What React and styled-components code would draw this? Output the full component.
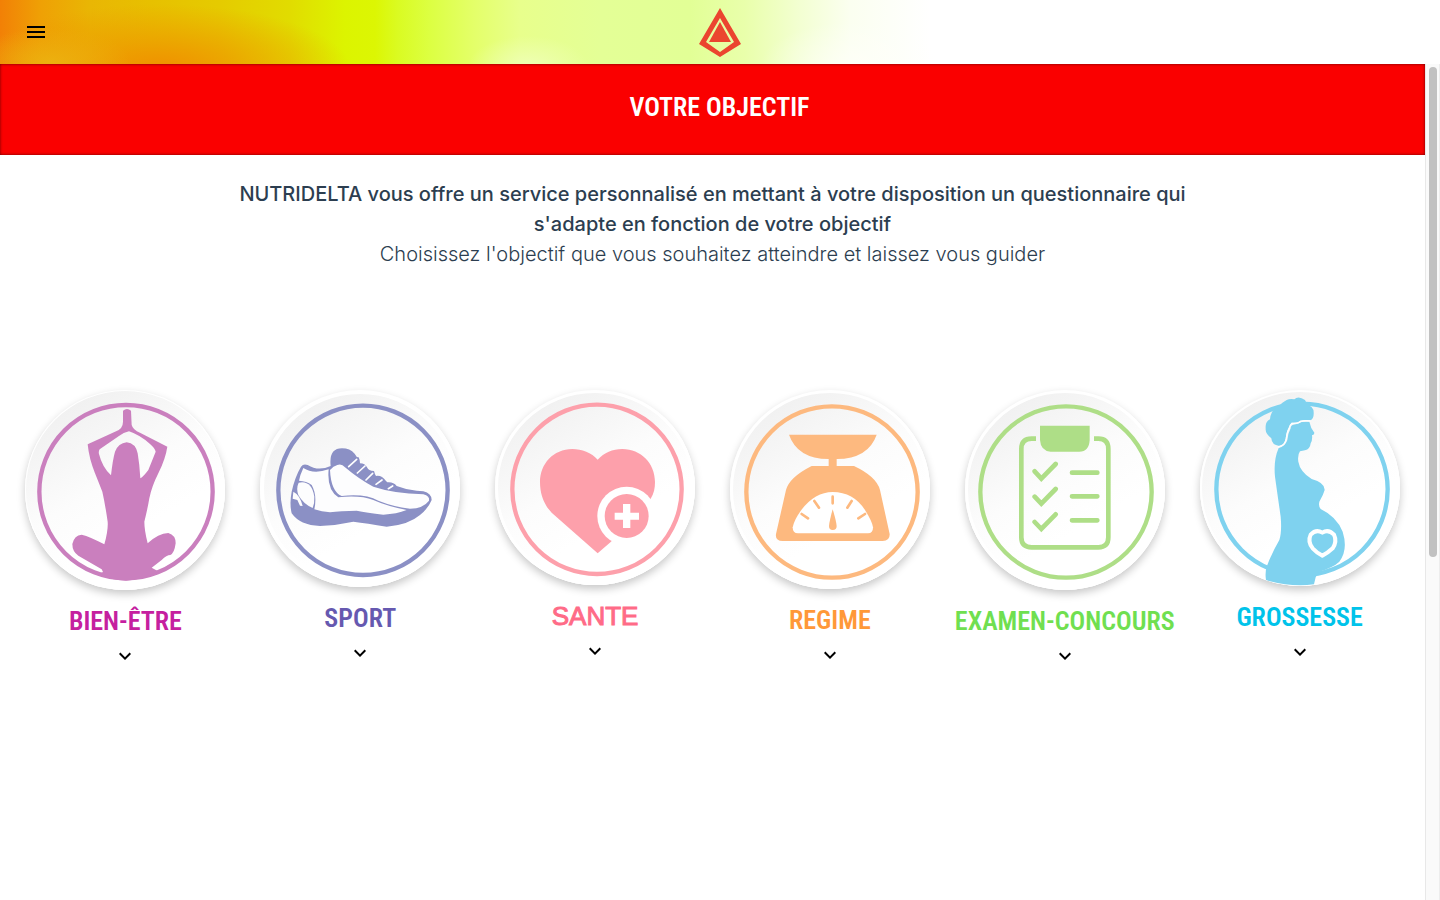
import React from "react";
import styled, { createGlobalStyle } from "styled-components";

const GlobalStyle = createGlobalStyle`
  *, *::before, *::after { box-sizing: border-box; }
  body { margin: 0; background: #fff; font-family: Inter, "Open Sans", sans-serif; color: #2c3e50; }
  h1, p { margin: 0; }
`;

const Page = styled.div`
  display: flex;
  flex-direction: column;
  min-height: 100vh;
`;

const Header = styled.header`
  display: grid;
  grid-template-columns: 1fr auto 1fr;
  align-items: center;
  height: 64px;
  padding: 0 12px;
  background:
    radial-gradient(ellipse 80px 34px at 50px 62px, rgba(236, 178, 16, 0.9), rgba(236, 178, 16, 0) 100%),
    radial-gradient(ellipse 190px 64px at 160px 68px, rgba(240, 144, 0, 1), rgba(238, 150, 0, 0.6) 45%, rgba(236, 160, 0, 0) 100%),
    radial-gradient(ellipse 60px 30px at 528px 66px, rgba(240, 255, 190, 0.8), rgba(238, 255, 190, 0) 100%),
    radial-gradient(ellipse 90px 44px at 850px 66px, rgba(255, 255, 250, 0.7), rgba(255, 255, 250, 0) 100%),
    linear-gradient(90deg, #f28006 0, #efa005 40px, #e9b604 90px, #e7c000 150px, #e5cb00 220px, #e1dc00 290px, #dcf400 345px, #dcf603 375px, #dafb22 398px, #dcff42 430px, #e4ff6a 475px, #e8ff8c 520px, #e4ff96 600px, #e2ff96 690px, #e9ffab 745px, #f3ffd2 800px, #fbfff0 850px, #fff 930px);
`;

const MenuButton = styled.button`
  display: flex;
  align-items: center;
  justify-content: center;
  justify-self: start;
  width: 48px;
  height: 48px;
  padding: 0;
  border: 0;
  background: none;
  cursor: pointer;
`;

const Logo = styled.svg`
  display: block;
  width: 44px;
  height: 50px;
`;

const Body = styled.div`
  display: flex;
  flex: 1;
`;

const Content = styled.main`
  flex: 1;
  min-width: 0;
`;

const ScrollTrack = styled.div`
  width: 15px;
  padding: 3px;
  background: #fafafa;
  border-left: 1px solid #e8e8e8;
  border-right: 1px solid #ededed;
`;

const ScrollThumb = styled.div`
  width: 8px;
  height: 59%;
  border-radius: 4px;
  background: #c1c1c1;
`;

const Banner = styled.div`
  padding: 25px 0 30px 14px;
  background: #fa0000;
  box-shadow: inset 0 0 3px #600;
  text-align: center;
`;

const BannerTitle = styled.h1`
  color: #fff;
  font: 600 26px/36px "Roboto Condensed", "Liberation Sans Narrow", sans-serif;
`;

const Intro = styled.div`
  max-width: 1000px;
  margin: 0 auto;
  padding: 24px 16px 0;
  font-size: 20px;
  line-height: 30px;
  text-align: center;
`;

const Lead = styled.p`
  font-weight: 500;
`;

const Hint = styled.p`
  font-weight: 300;
`;

const Goals = styled.div`
  display: grid;
  grid-template-columns: repeat(6, minmax(0, 1fr));
  align-items: start;
  padding: 121px 8px 0;
`;

const Goal = styled.button`
  display: flex;
  flex-direction: column;
  align-items: center;
  padding: 0;
  border: 0;
  background: none;
  color: ${(p) => p.$color};
  cursor: pointer;
`;

const Disc = styled.span`
  display: block;
  width: 200px;
  height: ${(p) => p.$height}px;
  border-radius: 50%;
  background: linear-gradient(150deg, #efefef 8%, #fcfcfc 45%, #fff 65%);
  box-shadow: inset 0 0 0 ${(p) => p.$rim}px #fff, 0 4px 9px rgba(0, 0, 0, 0.22);
`;

const Picture = styled.svg`
  display: block;
  width: 200px;
  height: 200px;
`;

const GoalName = styled.span`
  margin-top: 13px;
  white-space: nowrap;
  font: 600 26px/36px "Roboto Condensed", "Liberation Sans Narrow", sans-serif;
`;

const PlainGoalName = styled(GoalName)`
  font: 400 26px/36px "Liberation Sans", sans-serif;
  -webkit-text-stroke: 1px currentColor;
`;

const Chevron = styled.svg`
  display: block;
  width: 24px;
  height: 24px;
  margin-top: 5px;
  fill: #000;
`;

const Yoga = () => (
  <g fill="#ca7fbe">
    <circle cx="333" cy="335" r="260" fill="none" stroke="#ca7fbe" strokeWidth="13" />
    <path
      fillRule="evenodd"
      d="M324 92Q336 82 348 92L350 135Q354 150 375 158L457 200Q452 235 430 280Q410 320 403 355Q398 385 388 425Q388 450 398 490Q430 460 460 459Q482 465 482 490Q478 520 466 525Q455 525 440 540L410 563L424 571L432 576Q380 600 333 602Q285 600 250 582L264 576L260 568L190 527Q172 515 172 492Q178 465 200 464Q225 470 268 493Q280 450 278 425Q270 370 262 335Q250 305 240 280Q222 235 218 193L300 155Q324 148 324 125ZM342 154Q325 158 313 167L254 208Q250 215 252 222Q262 262 288 286Q293 240 300 215Q310 190 335 187Q362 190 368 220Q374 255 376 295Q385 290 400 270Q412 240 422 215Q420 205 405 192Q375 165 342 154Z"
    />
  </g>
);

const Shoe = () => (
  <g fill="#8b90c5">
    <circle cx="339" cy="331" r="254" fill="none" stroke="#8b90c5" strokeWidth="13" />
    <path d="M242 258Q236 205 276 205Q300 205 314 221Q320 233 326 232Q330 240 330 250Q345 250 352 263Q355 272 372 273Q375 285 378 288Q395 285 408 303L412 307Q430 305 440 318Q470 330 500 332L520 334Q545 340 545 360Q535 385 510 405Q475 435 410 440Q350 430 310 425Q260 436 210 438Q150 436 125 400Q118 370 125 335Q135 290 153 260Q160 250 173 255Q205 275 242 258Z" />
    <g fill="#fdfdfe">
      <path d="M146 308Q185 300 193 350Q194 370 188 384Q160 372 145 345Q138 325 146 308Z" />
      <path d="M160 264Q190 284 236 268Q230 330 265 352Q330 345 370 360Q410 378 470 390Q440 402 400 404Q350 398 320 392Q270 392 240 397Q215 395 193 388Q202 345 185 315Q170 303 147 302Q150 285 160 264Z" />
      <path d="M262 255Q275 250 285 262Q330 300 370 320Q430 340 520 343Q540 348 537 362Q520 385 480 386Q430 380 385 362Q345 340 275 348Q243 335 240 270Q250 258 262 255Z" />
      <path d="M130 335Q150 345 158 378L150 377L142 360L128 356Z" />
    </g>
    <path fill="none" stroke="#fff" strokeWidth="5" strokeLinecap="round" d="M296 260L320 238M322 279L345 258M348 300L368 280M378 313L396 300M415 326L428 318" />
  </g>
);

const HealthHeart = () => (
  <g fill="#fda0ab">
    <circle cx="336" cy="328" r="254" fill="none" stroke="#fda0ab" strokeWidth="13" />
    <path d="M338 239C320 218 290 207 262 207C205 207 165 252 165 306C165 340 175 372 200 398L338 520L378 485L497 356C507 340 510 325 510 306C510 250 468 207 412 207C382 207 358 218 338 239Z" />
    <circle cx="425" cy="408" r="88" fill="#fff" />
    <circle cx="425" cy="408" r="66" />
    <path fill="#fff" d="M414 372H436V398H462V419H436V444H414V419H389V398H414Z" />
  </g>
);

const Scale = () => (
  <g fill="#fdb97f">
    <circle cx="336" cy="336" r="257" fill="none" stroke="#fdb97f" strokeWidth="13" />
    <path d="M207 164H470Q445 236 350 237V258H402Q470 290 480 330L509 462Q510 483 488 483H188Q165 483 168 462L198 330Q208 292 275 258H326V237Q232 236 207 164Z" />
    <path fill="#fff" d="M338 336Q400 336 435 390Q457 425 459 442Q459 460 444 460H234Q218 460 218 442Q222 420 244 390Q285 336 338 336Z" />
    <path d="M338 388Q348 420 350 438Q350 450 338 450Q327 450 327 438Q329 420 338 388Z" />
    <path stroke="#fdb97f" strokeWidth="8" strokeLinecap="round" d="M338 350V370M283 363L297 383M395 363L382 383M245 402L264 415M435 402L415 415" />
  </g>
);

const Checklist = () => (
  <g fill="none" stroke="#aede87" strokeLinecap="round">
    <circle cx="333" cy="336" r="257" strokeWidth="13" />
    <path strokeLinecap="butt" strokeWidth="14" d="M243 176H230Q199 176 199 207V472Q199 502 230 502H430Q460 502 460 472V207Q460 176 430 176H417" />
    <path fill="#aede87" stroke="none" d="M255 137H404V180Q402 215 373 215H287Q257 213 255 180Z" />
    <path strokeWidth="14" d="M239 274L259 296L302 252M239 350L259 371L302 327M239 426L259 447L302 403M351 278H427M351 349H427M351 421H427" />
  </g>
);

const Pregnancy = () => (
  <g fill="#7fd2ef">
    <circle cx="336" cy="328" r="257" fill="none" stroke="#7fd2ef" strokeWidth="13" />
    <path fill="#fff" d="M368 616L376 591L392 590L394 612Z" />
    <path d="M266 204Q285 200 292 180Q294 160 302 145Q302 136 310 134Q325 132 335 126L358 125Q362 145 373 158Q374 164 366 166Q368 180 362 190Q360 208 345 211L330 214Q322 225 325 245Q330 275 365 297Q405 308 404 330Q400 345 388 365Q385 380 392 387Q440 410 458 455Q475 510 448 545Q430 562 388 575L377 592L372 613Q300 622 228 600Q224 575 232 555Q245 520 268 480Q276 455 272 410Q262 340 255 290Q250 240 266 204Z" />
    <path d="M268 198Q245 195 244 175Q225 160 227 145Q225 125 240 118Q242 90 265 80Q275 68 290 60Q300 55 313 58Q325 46 345 60Q350 68 348 72Q372 80 371 98Q372 115 362 121Q345 118 330 122Q325 130 305 128Q298 135 296 145Q290 155 287 175Q285 195 268 198Z" />
    <path fill="none" stroke="#fff" strokeWidth="4" d="M362 123Q345 120 332 124Q325 131 306 130Q299 136 297 146Q291 156 289 176Q286 197 264 201" />
    <path fill="none" stroke="#fff" strokeWidth="12" strokeLinejoin="round" d="M397 458Q378 446 362 464Q352 485 368 505Q382 520 397 527Q412 520 428 505Q442 485 432 464Q415 446 397 458Z" />
  </g>
);

const goals = [
  { name: "BIEN-ÊTRE", color: "#c5209f", height: 200, rim: 1, Art: Yoga },
  { name: "SPORT", color: "#6659b0", height: 197, rim: 4, Art: Shoe },
  { name: "SANTE", color: "#ff6b87", height: 195, rim: 3, Art: HealthHeart, Name: PlainGoalName },
  { name: "REGIME", color: "#ff9838", height: 199, rim: 3, Art: Scale },
  { name: "EXAMEN-CONCOURS", color: "#70df50", height: 200, rim: 3, Art: Checklist },
  { name: "GROSSESSE", color: "#00c3ea", height: 196, rim: 2, Art: Pregnancy },
];

export default function App() {
  return (
    <Page>
      <GlobalStyle />
      <Header>
        <MenuButton aria-label="Menu">
          <svg width="24" height="24" viewBox="0 0 24 24" aria-hidden="true">
            <path d="M3 18h18v-2H3v2zm0-5h18v-2H3v2zm0-7v2h18V6H3z" />
          </svg>
        </MenuButton>
        <Logo viewBox="0 0 44 50" role="img" aria-label="Nutridelta">
          <path fill="#eb452f" fillRule="evenodd" d="M22 1 43 37 22 50 1 37zM22 11 8 35l14 10 14-10z" />
          <path fill="#eb452f" d="m22 15 11 20H11z" />
        </Logo>
      </Header>
      <Body>
        <Content>
          <Banner>
            <BannerTitle>VOTRE OBJECTIF</BannerTitle>
          </Banner>
          <Intro>
            <Lead>
              NUTRIDELTA vous offre un service personnalisé en mettant à votre disposition un questionnaire qui
              s'adapte en fonction de votre objectif
            </Lead>
            <Hint>Choisissez l'objectif que vous souhaitez atteindre et laissez vous guider</Hint>
          </Intro>
          <Goals>
            {goals.map(({ name, color, height, rim, Art, Name = GoalName }) => (
              <Goal key={name} $color={color}>
                <Disc $height={height} $rim={rim}>
                  <Picture viewBox="30 30 600 600" aria-hidden="true">
                    <Art />
                  </Picture>
                </Disc>
                <Name>{name}</Name>
                <Chevron viewBox="0 0 24 24" aria-hidden="true">
                  <path d="M7.4 8.6 12 13.2l4.6-4.6L18 10l-6 6-6-6z" />
                </Chevron>
              </Goal>
            ))}
          </Goals>
        </Content>
        <ScrollTrack aria-hidden="true">
          <ScrollThumb />
        </ScrollTrack>
      </Body>
    </Page>
  );
}
